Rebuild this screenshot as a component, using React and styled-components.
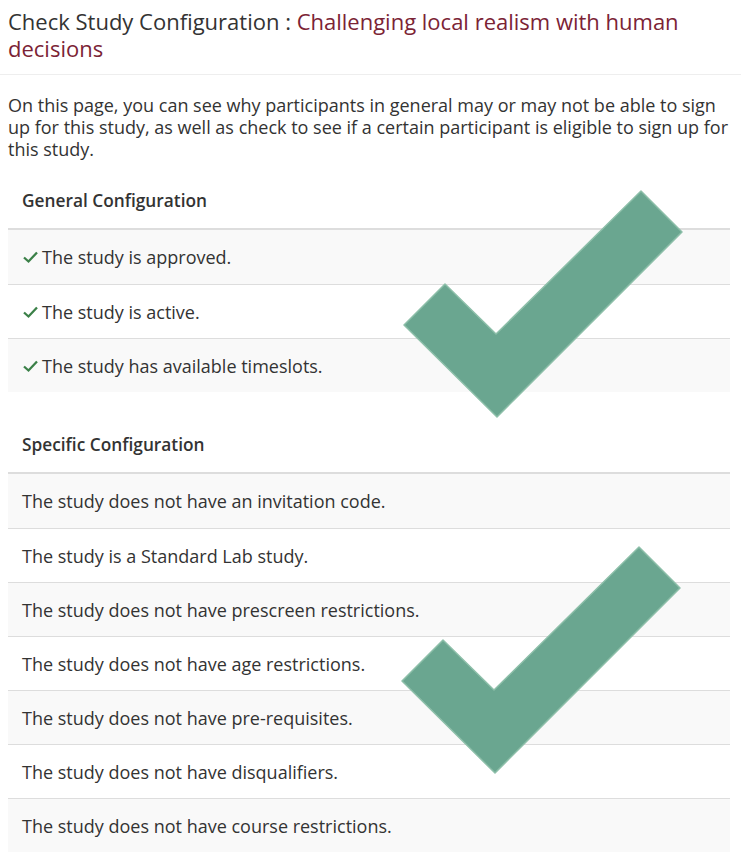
import React from 'react';
import styled, { createGlobalStyle } from 'styled-components';

const GlobalStyle = createGlobalStyle`
  body {
    margin: 0;
    background: #fff;
    color: #333;
    font-family: "Open Sans", "Liberation Sans", sans-serif;
  }
`;

const Header = styled.header`
  padding: 8px 8px 12px;
  border-bottom: 1px solid #eee;
`;

const Title = styled.h1`
  margin: 0;
  font-size: 22px;
  line-height: 27px;
  font-weight: 400;
  color: #333;
`;

const StudyName = styled.span`
  color: #7b2335;
`;

const Content = styled.main`
  padding: 19px 11px 0 8px;
`;

const Intro = styled.p`
  margin: 0 0 14px;
  font-size: 18px;
  line-height: 22px;
`;

const Table = styled.section`
  margin-bottom: 26px;
`;

const HeadCell = styled.div`
  padding: 15px 14px;
  font-size: 17.3px;
  line-height: 24px;
  font-weight: 600;
  border-bottom: 2px solid #ddd;
`;

const Body = styled.div`
  position: relative;
`;

const Row = styled.div`
  display: flex;
  align-items: center;
  gap: 3px;
  height: 54px;
  box-sizing: border-box;
  padding: 0 14px;
  font-size: 18px;
  border-top: 1px solid #ddd;
  background: ${p => (p.$odd ? '#f9f9f9' : '#fff')};
  &:first-child {
    border-top: none;
  }
`;

const Watermark = styled.svg`
  position: absolute;
  left: ${p => p.$left}px;
  top: ${p => p.$top}px;
  width: 282px;
  height: 230px;
  pointer-events: none;
`;

const SmallCheck = () => (
  <svg width="17" height="14" viewBox="0 0 17 14">
    <polyline
      points="2,7.5 6.5,11.5 15,2.5"
      fill="none"
      stroke="#3b8048"
      strokeWidth="2.3"
    />
  </svg>
);

const BigCheck = ({ left, top }) => (
  <Watermark $left={left} $top={top} viewBox="0 0 282 230">
    <polygon
      points="2,136 43,95 94,145 239,2 280,43 95,228"
      fill="#6aa690"
      stroke="#8dbfa9"
      strokeWidth="1.5"
      strokeLinejoin="round"
    />
  </Watermark>
);

const general = [
  'The study is approved.',
  'The study is active.',
  'The study has available timeslots.',
];

const specific = [
  'The study does not have an invitation code.',
  'The study is a Standard Lab study.',
  'The study does not have prescreen restrictions.',
  'The study does not have age restrictions.',
  'The study does not have pre-requisites.',
  'The study does not have disqualifiers.',
  'The study does not have course restrictions.',
];

const App = () => {
  return (
    <>
      <GlobalStyle />
      <Header>
        <Title>
          Check Study Configuration : <StudyName>Challenging local realism with human decisions</StudyName>
        </Title>
      </Header>
      <Content>
        <Intro>
          On this page, you can see why participants in general may or may not be able to sign
          up for this study, as well as check to see if a certain participant is eligible to sign
          up for this study.
        </Intro>
        <Table>
          <HeadCell>General Configuration</HeadCell>
          <Body>
            {general.map((t, i) => (
              <Row key={t} $odd={i % 2 === 0}>
                <SmallCheck />
                {t}
              </Row>
            ))}
            <BigCheck left={394} top={-41} />
          </Body>
        </Table>
        <Table>
          <HeadCell>Specific Configuration</HeadCell>
          <Body>
            {specific.map((t, i) => (
              <Row key={t} $odd={i % 2 === 0}>
                {t}
              </Row>
            ))}
            <BigCheck left={392} top={71} />
          </Body>
        </Table>
      </Content>
    </>
  );
};

export default App;
